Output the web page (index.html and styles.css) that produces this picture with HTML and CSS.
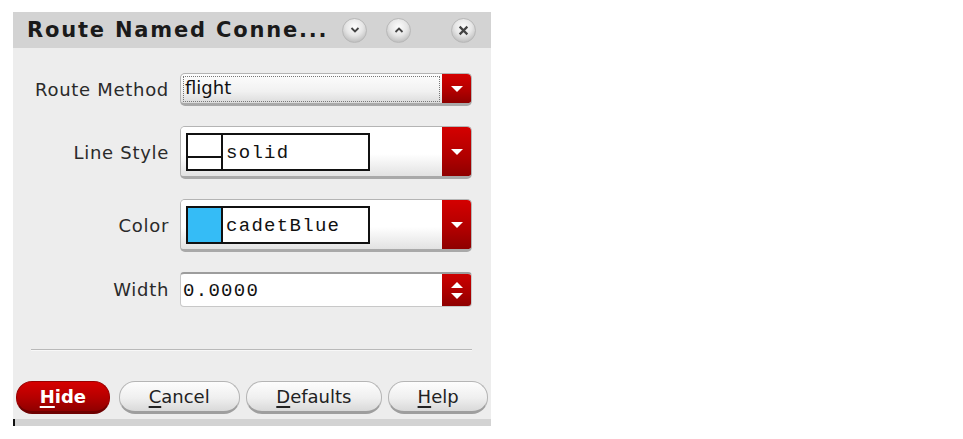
FILE: index.html
```html
<!DOCTYPE html>
<html lang="en">
<head>
  <meta charset="UTF-8" />
  <title>Route Named Connection</title>
  <link rel="stylesheet" href="styles.css">
</head>
<body>
  <div class="window">
    <div class="titlebar">
      <div class="title">Route Named Conne...</div>
      <span class="tb-btn tb-min">
        <svg width="10" height="8" viewBox="0 0 10 8"><path d="M1.5 2 L5 5.5 L8.5 2" fill="none" stroke="#444" stroke-width="1.8"/></svg>
      </span>
      <span class="tb-btn tb-max">
        <svg width="10" height="8" viewBox="0 0 10 8"><path d="M1.5 6 L5 2.5 L8.5 6" fill="none" stroke="#444" stroke-width="1.8"/></svg>
      </span>
      <span class="tb-btn tb-close">
        <svg width="11" height="11" viewBox="0 0 10 10"><path d="M1.5 1.5 L8.5 8.5 M8.5 1.5 L1.5 8.5" fill="none" stroke="#444" stroke-width="2"/></svg>
      </span>
    </div>

    <div class="content">
      <div class="form">
        <label class="lbl">Route Method</label>
        <div class="combo combo-small">
          <div class="combo-text"><span class="focus">flight</span></div>
          <div class="arrow"><span class="tri-down"></span></div>
        </div>

        <label class="lbl">Line Style</label>
        <div class="combo combo-big">
          <div class="combo-text">
            <div class="swatch-box">
              <div class="swatch swatch-line"></div>
              <div class="swatch-name">solid</div>
            </div>
          </div>
          <div class="arrow"><span class="tri-down"></span></div>
        </div>

        <label class="lbl">Color</label>
        <div class="combo combo-big">
          <div class="combo-text">
            <div class="swatch-box">
              <div class="swatch swatch-color"></div>
              <div class="swatch-name">cadetBlue</div>
            </div>
          </div>
          <div class="arrow"><span class="tri-down"></span></div>
        </div>

        <label class="lbl">Width</label>
        <div class="spin">
          <div class="spin-text">0.0000</div>
          <div class="spin-btns">
            <span class="tri-up"></span>
            <span class="tri-down"></span>
          </div>
        </div>
      </div>

      <div class="separator"></div>

      <div class="buttons">
        <button class="btn btn-hide"><u>H</u>ide</button>
        <button class="btn btn-cancel"><u>C</u>ancel</button>
        <button class="btn btn-defaults"><u>D</u>efaults</button>
        <button class="btn btn-help"><u>H</u>elp</button>
      </div>
    </div>
    <div class="bottom-band"></div>
  </div>
</body>
</html>
```

FILE: styles.css
```css
* {
  box-sizing: border-box;
}

body {
  margin: 0;
  background: #fff;
  font-family: "DejaVu Sans", sans-serif;
}

.window {
  margin: 12px 0 0 13px;
  width: 478px;
  background: #ededed;
}

/* title bar */
.titlebar {
  height: 36px;
  background: #d3d3d3;
  display: flex;
  align-items: center;
  padding: 0 15px 0 14px;
}

.title {
  font-weight: bold;
  font-size: 21px;
  letter-spacing: 1.8px;
  color: #1a1a1a;
  flex: 1;
  white-space: nowrap;
  padding-bottom: 1px;
}

.tb-btn {
  flex-shrink: 0;
  width: 25px;
  height: 25px;
  border-radius: 50%;
  background: radial-gradient(circle at 50% 35%, #fdfdfd 0%, #e6e6e6 45%, #a9a9a9 100%);
  border: 1px solid #b8b8b8;
  display: flex;
  align-items: center;
  justify-content: center;
}

.tb-min { margin-right: 19px; }
.tb-max { margin-right: 40px; }

/* form */
.content {
  padding: 25px 19px 0 18px;
}

.form {
  display: grid;
  grid-template-columns: 137px 292px;
  column-gap: 12px;
  row-gap: 20px;
  align-items: center;
}

.lbl {
  text-align: right;
  font-size: 18px;
  letter-spacing: 0.7px;
  margin-right: -1px;
  color: #2a2a2a;
  white-space: nowrap;
}

.combo {
  display: flex;
  border: 1px solid #b4b4b4;
  border-bottom: 3px solid #a9a9a9;
  border-radius: 5px;
  background: linear-gradient(#fdfdfd, #f1f1f1 60%, #dcdcdc);
  overflow: hidden;
}

.combo-small { height: 33px; }
.combo-big { height: 53px; }

.combo-text {
  flex: 1;
  display: flex;
  align-items: center;
  padding: 0 2px;
}

.combo-big .combo-text {
  padding: 0 0 0 5px;
  background: linear-gradient(#fff, #fff 55%, #e2e2e2);
}

.focus {
  display: block;
  width: 100%;
  height: 26px;
  border: 1px dotted #777;
  font-size: 18px;
  line-height: 22px;
  padding-left: 1px;
  color: #111;
}

.arrow {
  width: 29px;
  background: linear-gradient(#d40000, #b00000 60%, #8e0000);
  display: flex;
  align-items: center;
  justify-content: center;
}

.tri-down {
  width: 0;
  height: 0;
  border-left: 6px solid transparent;
  border-right: 6px solid transparent;
  border-top: 6px solid #fff;
}

.tri-up {
  width: 0;
  height: 0;
  border-left: 6px solid transparent;
  border-right: 6px solid transparent;
  border-bottom: 6px solid #fff;
}

.swatch-box {
  display: flex;
  width: 184px;
  height: 38px;
  border: 2px solid #111;
  background: #fff;
}

.swatch {
  width: 35px;
  border-right: 2px solid #111;
}

.swatch-line {
  background: linear-gradient(#fff 0, #fff 21px, #111 21px, #111 23px, #fff 23px);
}

.swatch-color {
  background: #35bcf6;
}

.swatch-name,
.spin-text {
  font-family: "Liberation Mono", monospace;
  font-size: 19px;
  letter-spacing: 1.3px;
  color: #111;
  display: flex;
  align-items: center;
  padding-left: 3px;
  padding-top: 2px;
}

.spin {
  display: flex;
  height: 35px;
  border: 1px solid #c8c8c8;
  border-top: 2px solid #9d9d9d;
  border-radius: 4px;
  background: #fff;
  overflow: hidden;
}

.spin-text {
  flex: 1;
  padding-left: 2px;
}

.spin-btns {
  width: 29px;
  background: linear-gradient(#cc0000, #aa0000 60%, #8e0000);
  display: flex;
  flex-direction: column;
  align-items: center;
  justify-content: center;
  gap: 5px;
}

.separator {
  margin: 42px 0 0 0;
  height: 2px;
  background: #b9b9b9;
  border-bottom: 1px solid #f8f8f8;
}

/* buttons */
.buttons {
  display: flex;
  margin: 30px -16px 0 -15px;
  gap: 7px;
}

.btn {
  height: 33px;
  border-radius: 16px;
  border: 1px solid #b5b5b5;
  border-bottom: 3px solid #9e9e9e;
  background: linear-gradient(#fdfdfd, #efefef 55%, #d9d9d9);
  font-family: "DejaVu Sans", sans-serif;
  font-size: 18px;
  color: #222;
  padding: 0;
}

.btn u {
  text-underline-offset: 3px;
  text-decoration-thickness: 2px;
}

.btn-hide {
  width: 94px;
  margin-right: 2px;
  background: linear-gradient(#d60000, #b40000 55%, #8f0000);
  border-color: #9a0000;
  border-bottom-color: #6e0000;
  color: #fff;
  font-weight: bold;
}

.btn-cancel { width: 121px; }
.btn-defaults { width: 137px; margin-left: -1px; }
.btn-help { width: 100px; margin-left: -1px; }

.bottom-band {
  margin-top: 5px;
  height: 7px;
  background: #d3d3d3;
  border-left: 2px solid #111;
}
```
